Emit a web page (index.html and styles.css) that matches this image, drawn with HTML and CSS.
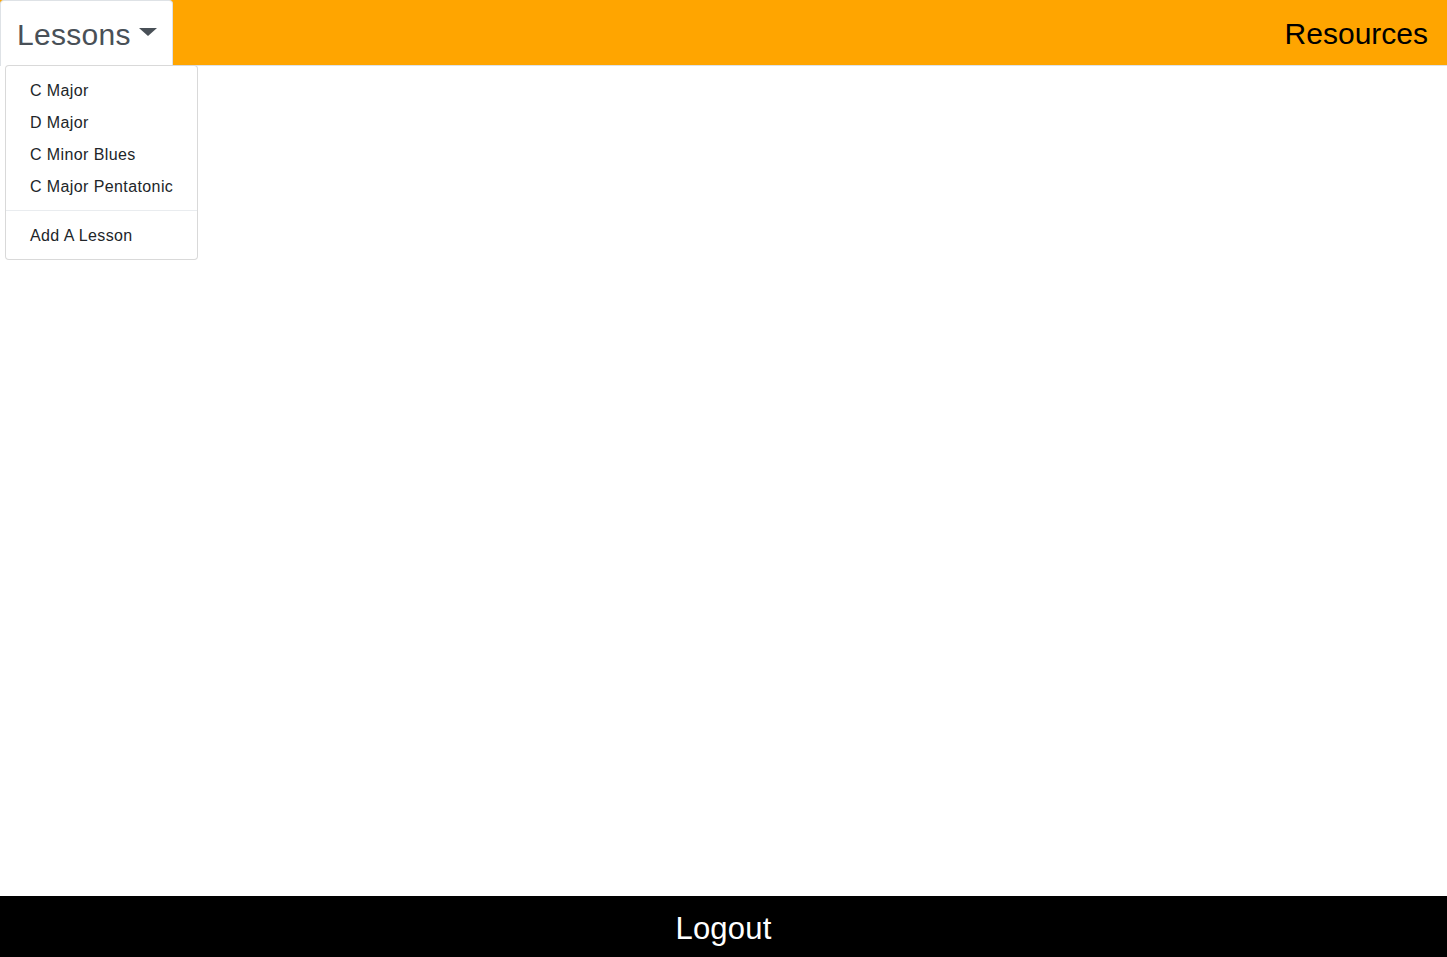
FILE: index.html
```html
<!DOCTYPE html>
<html lang="en">
<head>
<meta charset="utf-8">
<title>Lessons</title>
<link rel="stylesheet" href="styles.css">
</head>
<body>
<div class="page">
  <nav class="topbar">
    <div class="tab">
      <a class="tab-link" href="#">Lessons<span class="caret"></span></a>
      <div class="menu">
        <a class="menu-item" href="#">C Major</a>
        <a class="menu-item" href="#">D Major</a>
        <a class="menu-item" href="#">C Minor Blues</a>
        <a class="menu-item" href="#">C Major Pentatonic</a>
        <div class="menu-divider"></div>
        <a class="menu-item" href="#">Add A Lesson</a>
      </div>
    </div>
    <a class="resources" href="#">Resources</a>
  </nav>
  <main class="content"></main>
  <footer class="footer"><a class="logout" href="#">Logout</a></footer>
</div>
</body>
</html>
```

FILE: styles.css
```css
* { box-sizing: border-box; }
html, body { margin: 0; padding: 0; }
body {
  font-family: "Liberation Sans", Arial, sans-serif;
  font-size: 16px;
  color: #212529;
  background: #fff;
}
a { text-decoration: none; }
.page {
  display: flex;
  flex-direction: column;
  height: 100vh;
}
.topbar {
  display: flex;
  justify-content: space-between;
  align-items: stretch;
  height: 66px;
  background: #ffa500;
  border-bottom: 1px solid #dee2e6;
  flex: none;
}
.tab {
  position: relative;
  margin-bottom: -1px;
}
.tab-link {
  display: flex;
  align-items: center;
  height: 66px;
  padding: 2px 15px 0 16px;
  background: #fff;
  border: 1px solid #dee2e6;
  border-bottom: 0;
  border-radius: 4px 4px 0 0;
  color: #495057;
  font-size: 30px;
  letter-spacing: 0.3px;
  line-height: 1;
}
.caret {
  display: inline-block;
  margin-left: 8px;
  margin-top: -6px;
  border-top: 8px solid #495057;
  border-left: 9px solid transparent;
  border-right: 9px solid transparent;
}
.menu {
  position: absolute;
  top: 65px;
  left: 5px;
  z-index: 10;
  min-width: 160px;
  padding: 8px 0;
  background: #fff;
  border: 1px solid rgba(0, 0, 0, 0.15);
  border-radius: 4px;
  white-space: nowrap;
}
.menu-item {
  display: block;
  padding: 5px 24px 3px;
  line-height: 24px;
  color: #212529;
  font-size: 16px;
  letter-spacing: 0.4px;
}
.menu-divider {
  height: 0;
  margin: 8px 0;
  border-top: 1px solid #e9ecef;
}
.resources {
  display: flex;
  align-items: center;
  padding: 3px 19px 0 16px;
  color: #000;
  font-size: 30px;
  line-height: 1;
}
.content {
  flex: 1;
}
.footer {
  flex: none;
  height: 61px;
  background: #000;
  display: flex;
  justify-content: center;
  align-items: center;
  padding-top: 3px;
}
.logout {
  color: #fff;
  font-size: 31px;
  line-height: 1;
  letter-spacing: 0.2px;
}
```
